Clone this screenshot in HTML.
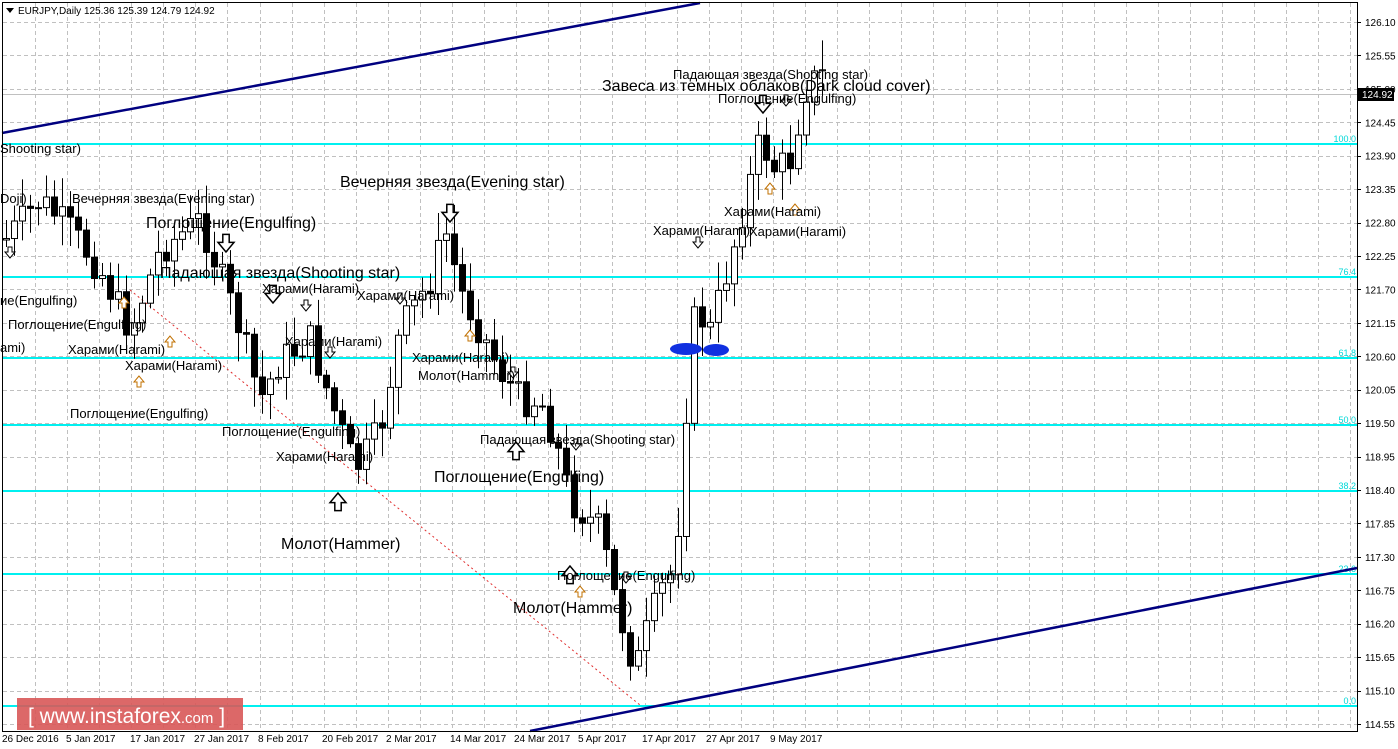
<!DOCTYPE html>
<html><head><meta charset="utf-8"><style>
body{margin:0;background:#fff;width:1398px;height:749px;overflow:hidden;font-family:"Liberation Sans",sans-serif}
svg{display:block}
</style></head><body>
<svg id="s" width="1398" height="749" xmlns="http://www.w3.org/2000/svg" font-family="Liberation Sans, DejaVu Sans, sans-serif">
<rect width="1398" height="749" fill="#fff"/>
<g id="grid" stroke="#c0c0c0" stroke-dasharray="4,3" stroke-width="1"></g>
<line x1="2" y1="94.5" x2="1357" y2="94.5" stroke="#c0c0c0"/>
<g stroke="#00f0f0" stroke-width="2">
<line x1="2" y1="144" x2="1357" y2="144"/><line x1="2" y1="277" x2="1357" y2="277"/>
<line x1="2" y1="358" x2="1357" y2="358"/><line x1="2" y1="425" x2="1357" y2="425"/>
<line x1="2" y1="491" x2="1357" y2="491"/><line x1="2" y1="574" x2="1357" y2="574"/>
<line x1="2" y1="706" x2="1357" y2="706"/></g>
<g fill="#00d8d8" font-size="9" text-anchor="end">
<text x="1356" y="142">100.0</text><text x="1356" y="275">76.4</text><text x="1356" y="356">61.8</text>
<text x="1356" y="423">50.0</text><text x="1356" y="489">38.2</text><text x="1356" y="572">23.6</text><text x="1356" y="704">0.0</text></g>
<line x1="130" y1="290" x2="640" y2="705" stroke="#e03030" stroke-dasharray="2,3"/>
<line x1="2" y1="133" x2="700" y2="3" stroke="#000080" stroke-width="2.5"/>
<line x1="530" y1="731" x2="1357" y2="568" stroke="#000080" stroke-width="2.5"/>
<g id="c"></g>
<g id="ar"></g>
<ellipse cx="686" cy="349" rx="16" ry="6" fill="#1030e0"/><ellipse cx="716" cy="350" rx="13" ry="6" fill="#1030e0"/>
<g font-size="13" fill="#000">
<text x="0" y="153">Shooting star)</text><text x="0" y="203">Doji)</text>
<text x="72" y="203">Вечерняя звезда(Evening star)</text>
<text x="0" y="305">ие(Engulfing)</text><text x="8" y="329">Поглощение(Engulfing)</text>
<text x="0" y="352">ami)</text><text x="68" y="354">Харами(Harami)</text><text x="125" y="370">Харами(Harami)</text>
<text x="70" y="418">Поглощение(Engulfing)</text><text x="222" y="436">Поглощение(Engulfing)</text>
<text x="276" y="461">Харами(Harami)</text><text x="262" y="293">Харами(Harami)</text>
<text x="285" y="346">Харами(Harami)</text><text x="357" y="300">Харами(Harami)</text>
<text x="412" y="362">Харами(Harami)</text><text x="418" y="380">Молот(Hammer)</text>
<text x="480" y="444">Падающая звезда(Shooting star)</text>
<text x="557" y="580">Поглощение(Engulfing)</text>
<text x="653" y="235">Харами(Harami)</text><text x="724" y="216">Харами(Harami)</text><text x="749" y="236">Харами(Harami)</text>
<text x="673" y="79">Падающая звезда(Shooting star)</text><text x="718" y="103">Поглощение(Engulfing)</text>
</g>
<g font-size="16" fill="#000">
<text x="146" y="228">Поглощение(Engulfing)</text><text x="160" y="278">Падающая звезда(Shooting star)</text>
<text x="340" y="187">Вечерняя звезда(Evening star)</text><text x="281" y="549">Молот(Hammer)</text>
<text x="434" y="482">Поглощение(Engulfing)</text><text x="513" y="613">Молот(Hammer)</text>
<text x="602" y="91">Завеса из темных облаков(Dark cloud cover)</text>
</g>
<rect x="2.5" y="2.5" width="1355" height="729" fill="none" stroke="#000"/>
<g font-size="10" fill="#000" id="pl"></g>
<rect x="1358" y="88" width="36" height="13" fill="#000"/><text x="1362" y="98" font-size="10" fill="#fff">124.92</text>
<g font-size="10" fill="#000">
<path d="M6 8 l8 0 l-4 5z" fill="#000"/>
<text x="18" y="14">EURJPY,Daily  125.36 125.39 124.79 124.92</text>
<text x="2" y="742">26 Dec 2016</text><text x="66" y="742">5 Jan 2017</text><text x="130" y="742">17 Jan 2017</text>
<text x="194" y="742">27 Jan 2017</text><text x="258" y="742">8 Feb 2017</text><text x="322" y="742">20 Feb 2017</text>
<text x="386" y="742">2 Mar 2017</text><text x="450" y="742">14 Mar 2017</text><text x="514" y="742">24 Mar 2017</text>
<text x="578" y="742">5 Apr 2017</text><text x="642" y="742">17 Apr 2017</text><text x="706" y="742">27 Apr 2017</text>
<text x="770" y="742">9 May 2017</text></g>
<rect x="17" y="698" width="226" height="32" fill="#d85858" opacity="0.9"/>
<text x="28" y="723" font-size="21" fill="#fff">[ www.instaforex<tspan font-size="15">.com</tspan> ]</text>
</svg>
<script>
var ns="http://www.w3.org/2000/svg";
function el(p,t,a){var e=document.createElementNS(ns,t);for(var k in a)e.setAttribute(k,a[k]);p.appendChild(e);return e;}
var g=document.getElementById("grid");
for(var x=35;x<1357;x+=32.08)el(g,"line",{x1:Math.round(x)+.5,y1:3,x2:Math.round(x)+.5,y2:731});
var pl=document.getElementById("pl");
for(var i=0;i<22;i++){var y=22+i*33.43;el(g,"line",{x1:3,y1:Math.round(y)+.5,x2:1357,y2:Math.round(y)+.5});
el(pl,"line",{x1:1357,y1:Math.round(y)+.5,x2:1361,y2:Math.round(y)+.5,stroke:"#000"});
var t=el(pl,"text",{x:1365,y:y+4});t.textContent=(126.10-i*0.55).toFixed(2);}
var kp=[[5,240],[40,200],[70,230],[100,270],[130,330],[160,250],[200,220],[240,330],[260,400],[280,360],[310,340],[330,400],[355,470],[380,430],[400,330],[430,280],[445,230],[460,290],[480,330],[500,370],[520,400],[540,400],[555,440],[570,500],[600,530],[615,600],[635,670],[650,620],[665,580],[675,570],[684,430],[695,310],[710,330],[730,260],[745,200],[760,140],[775,170],[790,160],[805,90],[818,75]];
function at(x){for(var i=1;i<kp.length;i++)if(x<=kp[i][0]){var a=kp[i-1],b=kp[i];return a[1]+(b[1]-a[1])*(x-a[0])/(b[0]-a[0]);}return 75;}
var seed=7;function r(){seed=(seed*9301+49297)%233280;return seed/233280;}
var c=document.getElementById("c"),prev=at(5);
for(var x=6;x<=822;x+=8){var cl=at(x)+(r()-0.5)*34,op=prev;var hi=Math.min(op,cl)-r()*26-4,lo=Math.max(op,cl)+r()*26+4;
el(c,"line",{x1:x+.5,y1:hi,x2:x+.5,y2:lo,stroke:"#000"});
var bull=cl<op;el(c,"rect",{x:x-2.5,y:Math.min(op,cl),width:6,height:Math.max(1,Math.abs(cl-op)),fill:bull?"#fff":"#000",stroke:"#000"});prev=cl;}
var ar=document.getElementById("ar");
function arrow(x,y,up,big,col){var s=big?1.6:1;var d=up?"M"+x+" "+y+" l"+(-5*s)+" "+(6*s)+" l"+(3*s)+" 0 l0 "+(5*s)+" l"+(4*s)+" 0 l0 "+(-5*s)+" l"+(3*s)+" 0z":"M"+x+" "+y+" l"+(-5*s)+" "+(-6*s)+" l"+(3*s)+" 0 l0 "+(-5*s)+" l"+(4*s)+" 0 l0 "+(5*s)+" l"+(3*s)+" 0z";
el(ar,"path",{d:d,fill:"#fff",stroke:col||"#000","stroke-width":big?1.5:1});}
[[10,258,0],[400,304,0],[306,311,0],[330,358,0],[698,248,0],[786,106,0],[576,450,0],[580,586,1],[513,378,0],[470,330,1],[139,376,1],[170,336,1],[124,297,1],[770,183,1],[795,204,1],[626,583,0]].forEach(function(a){arrow(a[0],a[1],a[2],false,a[2]?"#c07000":"#000")});
[[450,222,0],[226,252,0],[273,303,0],[763,113,0],[338,493,1],[516,442,1],[570,566,1]].forEach(function(a){arrow(a[0],a[1],a[2],true,"#000")});
</script>
</body></html>
